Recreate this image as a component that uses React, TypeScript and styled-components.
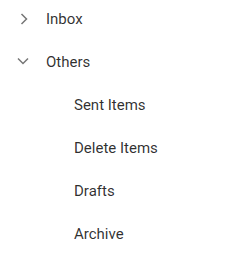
import React from "react";
import styled, { createGlobalStyle } from "styled-components";

const Global = createGlobalStyle`
  html, body { margin: 0; padding: 0; background: #fff; }
  body { font-family: Roboto, "Noto Sans", sans-serif; }
`;

const Tree = styled.ul`
  list-style: none;
  margin: 0;
  padding: 0;
  display: flex;
  flex-direction: column;
  gap: 5px;
`;

const Row = styled.li<{ $level: number }>`
  display: flex;
  align-items: center;
  height: 38px;
  padding-left: ${(p) => 12 + p.$level * 28}px;
`;

const IconBox = styled.span`
  width: 24px;
  height: 24px;
  flex: none;
  margin-right: 10px;
  display: flex;
  color: rgba(0, 0, 0, 0.54);
`;

const Label = styled.span`
  font-size: 15px;
  color: rgba(0, 0, 0, 0.82);
  white-space: nowrap;
`;

type Node = { label: string; level: number; toggle?: "open" | "closed" };

const nodes: Node[] = [
  { label: "Inbox", level: 0, toggle: "closed" },
  { label: "Others", level: 0, toggle: "open" },
  { label: "Sent Items", level: 1 },
  { label: "Delete Items", level: 1 },
  { label: "Drafts", level: 1 },
  { label: "Archive", level: 1 },
];

function Chevron({ open }: { open: boolean }) {
  return (
    <svg width="24" height="24" viewBox="0 0 24 24" fill="none">
      {open ? (
        <polyline points="6,8.5 11,13.5 16,8.5" stroke="currentColor" strokeWidth="1.5" />
      ) : (
        <polyline points="9.5,7 14.5,12 9.5,17" stroke="currentColor" strokeWidth="1.5" />
      )}
    </svg>
  );
}

export default function App() {
  return (
    <>
      <Global />
      <Tree>
        {nodes.map((n) => (
          <Row key={n.label} $level={n.level}>
            <IconBox>{n.toggle && <Chevron open={n.toggle === "open"} />}</IconBox>
            <Label>{n.label}</Label>
          </Row>
        ))}
      </Tree>
    </>
  );
}
